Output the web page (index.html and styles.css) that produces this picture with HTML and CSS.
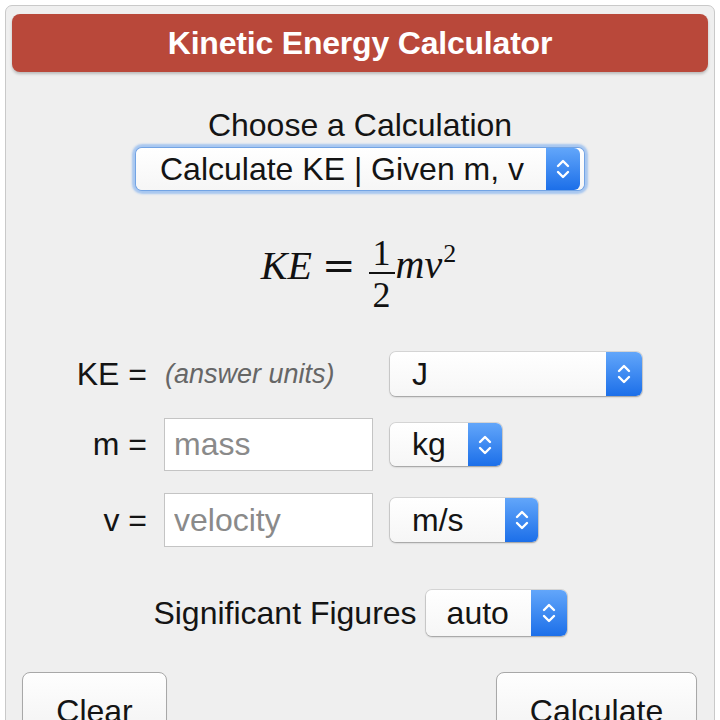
FILE: index.html
```html
<!DOCTYPE html>
<html lang="en">
<head>
<meta charset="utf-8">
<title>Kinetic Energy Calculator</title>
<link rel="stylesheet" href="styles.css">
</head>
<body>
<div class="panel">
  <div class="header">Kinetic Energy Calculator</div>

  <div class="choose">Choose a Calculation</div>
  <div class="select main">
    <span class="val">Calculate KE | Given m, v</span>
    <span class="arr"><svg width="16" height="26" viewBox="0 0 16 26"><path d="M3 10 L8 5 L13 10 M3 16 L8 21 L13 16" fill="none" stroke="#fff" stroke-width="2.4" stroke-linecap="round" stroke-linejoin="round"/></svg></span>
  </div>

  <div class="formula">
    <span class="mi ke">KE</span>
    <span class="mo">=</span>
    <span class="frac"><span class="num">1</span><span class="bar"></span><span class="den">2</span></span>
    <span class="mi mv">mv</span>
    <span class="sup">2</span>
  </div>

  <div class="grid">
    <div class="lbl">KE =</div>
    <div class="units">(answer units)</div>
    <div class="cell">
      <div class="select w-j">
        <span class="val">J</span>
        <span class="arr"><svg width="16" height="26" viewBox="0 0 16 26"><path d="M3 10 L8 5 L13 10 M3 16 L8 21 L13 16" fill="none" stroke="#fff" stroke-width="2.4" stroke-linecap="round" stroke-linejoin="round"/></svg></span>
      </div>
    </div>

    <div class="lbl">m =</div>
    <input class="field" type="text" placeholder="mass">
    <div class="cell">
      <div class="select w-kg">
        <span class="val">kg</span>
        <span class="arr"><svg width="16" height="26" viewBox="0 0 16 26"><path d="M3 10 L8 5 L13 10 M3 16 L8 21 L13 16" fill="none" stroke="#fff" stroke-width="2.4" stroke-linecap="round" stroke-linejoin="round"/></svg></span>
      </div>
    </div>

    <div class="lbl">v =</div>
    <input class="field" type="text" placeholder="velocity">
    <div class="cell">
      <div class="select w-ms">
        <span class="val">m/s</span>
        <span class="arr"><svg width="16" height="26" viewBox="0 0 16 26"><path d="M3 10 L8 5 L13 10 M3 16 L8 21 L13 16" fill="none" stroke="#fff" stroke-width="2.4" stroke-linecap="round" stroke-linejoin="round"/></svg></span>
      </div>
    </div>
  </div>

  <div class="sig">
    <span>Significant Figures</span>
    <div class="select w-auto">
      <span class="val">auto</span>
      <span class="arr"><svg width="16" height="26" viewBox="0 0 16 26"><path d="M3 10 L8 5 L13 10 M3 16 L8 21 L13 16" fill="none" stroke="#fff" stroke-width="2.4" stroke-linecap="round" stroke-linejoin="round"/></svg></span>
    </div>
  </div>

  <div class="buttons">
    <button class="btn clear" type="button">Clear</button>
    <button class="btn calc" type="button">Calculate</button>
  </div>
</div>
</body>
</html>
```

FILE: styles.css
```css
html, body {
  margin: 0;
  padding: 0;
  height: 720px;
  overflow: hidden;
  background: #ffffff;
}

body {
  font-family: "Liberation Sans", Arial, sans-serif;
  color: #141414;
}

.panel {
  margin: 5px 5px 0 5px;
  width: 696px;
  height: 780px;
  padding: 8px 6px 0 6px;
  border: 1px solid #c9c9c9;
  border-radius: 7px;
  background: #efefef;
  display: flex;
  flex-direction: column;
}

.header {
  height: 58px;
  line-height: 58px;
  background: #b9483a;
  border-radius: 8px;
  box-shadow: 0 2px 3px rgba(0, 0, 0, 0.22);
  color: #ffffff;
  font-weight: bold;
  font-size: 32px;
  text-align: center;
  letter-spacing: -0.2px;
}

.choose {
  margin-top: 35px;
  font-size: 32px;
  line-height: 36px;
  text-align: center;
}

/* custom select */
.select {
  display: flex;
  align-items: center;
  height: 44px;
  font-size: 32px;
  background: linear-gradient(#ffffff, #f6f6f6);
  border-radius: 6px;
  box-shadow: 0 0 0 1px rgba(0, 0, 0, 0.10), 0 1px 2px rgba(0, 0, 0, 0.28);
  box-sizing: border-box;
}

.select .val {
  flex: 1;
  padding-left: 22px;
  white-space: nowrap;
}

.select .arr {
  width: 35px;
  align-self: stretch;
  display: flex;
  align-items: center;
  justify-content: center;
  background: linear-gradient(#62a6fa, #1c6fe9);
  border-radius: 0 6px 6px 0;
}

.select.main {
  margin: 5px auto 0 auto;
  width: 448px;
  height: 42px;
  box-shadow: 0 0 0 1px rgba(80, 140, 220, 0.6), 0 0 2px 4px rgba(110, 165, 240, 0.55);
}

.select.main .val {
  padding-left: 24px;
}

.select.main .arr {
  width: 34px;
  margin-right: 4px;
}

/* formula */
.formula {
  margin-top: 49px;
  height: 72px;
  display: flex;
  align-items: flex-start;
  justify-content: center;
  padding-right: 3px;
  font-family: "Liberation Serif", "Times New Roman", serif;
  color: #111;
}

.mi {
  font-style: italic;
  font-size: 40px;
  line-height: 44px;
}

.ke {
  margin-top: 5px;
  margin-right: 10px;
}

.mo {
  font-family: "DejaVu Serif", serif;
  font-size: 40px;
  line-height: 44px;
  margin-top: 4px;
  margin-right: 13px;
}

.frac {
  width: 26px;
  margin-top: -2px;
  display: flex;
  flex-direction: column;
  align-items: center;
  font-size: 36px;
}

.num, .den {
  line-height: 32px;
}

.bar {
  width: 26px;
  height: 1.8px;
  background: #111;
  margin-top: 3px;
}

.den {
  margin-top: 5px;
}

.mv {
  margin-top: 4px;
  margin-left: 1px;
}

.sup {
  font-size: 26px;
  line-height: 26px;
  margin-top: 2px;
  margin-left: 1px;
}

/* form grid */
.grid {
  margin-top: 41px;
  display: grid;
  grid-template-columns: 136px 209px 1fr;
  grid-template-rows: 44px 53px 54px;
  column-gap: 16px;
  row-gap: 22px;
  align-items: center;
}

.lbl {
  font-size: 32px;
  text-align: right;
  margin-right: 1px;
}

.units {
  font-size: 27px;
  font-style: italic;
  color: #666666;
  padding-left: 1px;
}

.cell {
  display: flex;
  align-items: center;
  padding-left: 1px;
}

.field {
  box-sizing: border-box;
  width: 209px;
  height: 100%;
  margin: 0;
  padding: 0 0 0 9px;
  border: 1px solid #c4c4c4;
  border-radius: 0;
  background: #ffffff;
  font-family: "Liberation Sans", Arial, sans-serif;
  font-size: 32px;
  color: #141414;
  outline: none;
}

.field::placeholder {
  color: #8a8a8a;
}

.w-j { width: 252px; }
.w-kg { width: 112px; height: 43px; }
.w-ms { width: 148px; }
.w-auto { width: 141px; height: 46px; }
.w-auto .val { padding-left: 21px; }

.w-kg .arr { width: 34px; }
.w-ms .arr { width: 33px; }
.w-j .arr { width: 36px; }
.w-auto .arr { width: 36px; }

/* significant figures */
.sig {
  margin-top: 43px;
  display: flex;
  align-items: center;
  justify-content: center;
  gap: 9px;
  font-size: 32px;
}

/* buttons */
.buttons {
  margin-top: 36px;
  display: flex;
  justify-content: space-between;
  padding: 0 11px 0 10px;
}

.btn {
  box-sizing: border-box;
  height: 64px;
  margin: 0;
  padding: 14px 0 0 0;
  border: 1px solid #a8a8a8;
  border-radius: 8px;
  background: linear-gradient(#fefefe, #f3f3f3);
  box-shadow: 0 1px 1px rgba(0, 0, 0, 0.08);
  font-family: "Liberation Sans", Arial, sans-serif;
  font-size: 32px;
  line-height: 36px;
  color: #141414;
  text-align: center;
  vertical-align: top;
}

.btn.clear { width: 145px; }
.btn.calc { width: 201px; }
```
